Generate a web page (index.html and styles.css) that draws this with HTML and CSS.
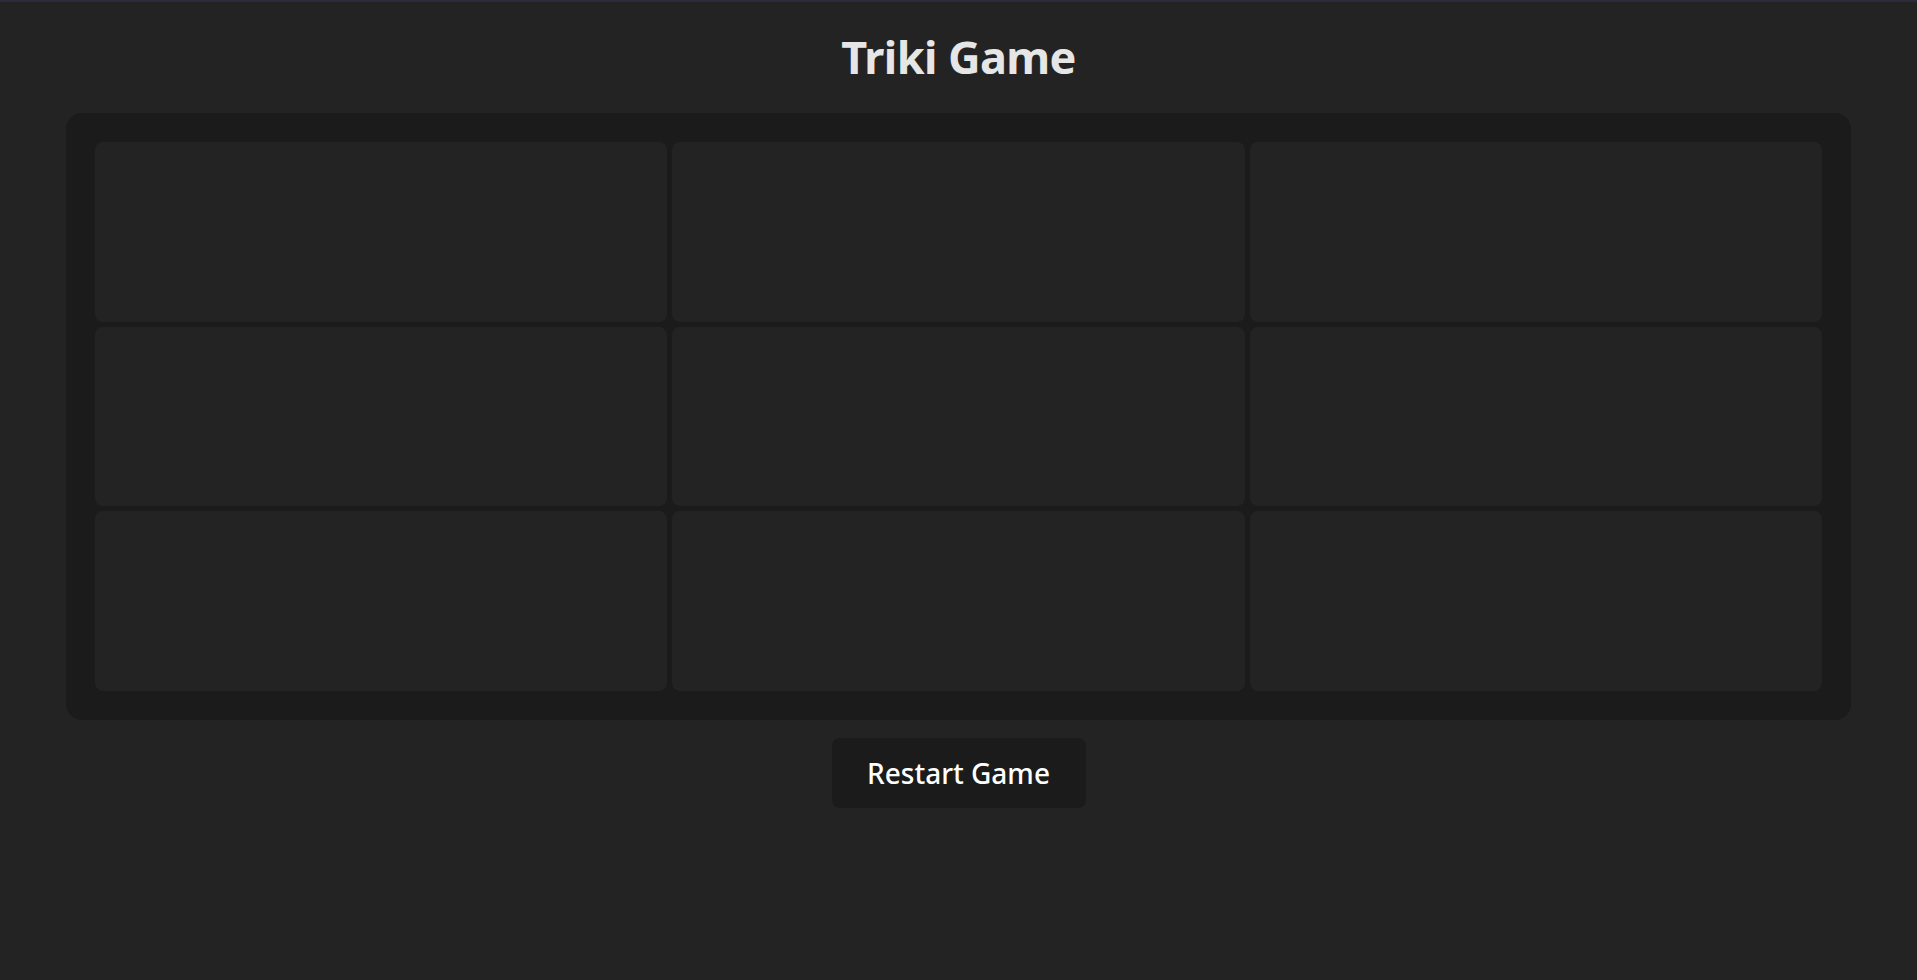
FILE: index.html
```html
<!DOCTYPE html>
<html lang="en">
<head>
<meta charset="utf-8">
<title>Triki Game</title>
<link rel="stylesheet" href="styles.css">
</head>
<body>
<main class="app">
  <h1 class="title">Triki Game</h1>
  <div class="board">
    <div class="cell"></div>
    <div class="cell"></div>
    <div class="cell"></div>
    <div class="cell"></div>
    <div class="cell"></div>
    <div class="cell"></div>
    <div class="cell"></div>
    <div class="cell"></div>
    <div class="cell"></div>
  </div>
  <button class="restart">Restart Game</button>
</main>
</body>
</html>
```
FILE: styles.css
```css
html, body {
  margin: 0;
  padding: 0;
}
body {
  background: #232323;
  border-top: 2px solid #2b2b3c;
  min-height: 978px;
  font-family: "Noto Sans", "Open Sans", sans-serif;
}
.app {
  display: flex;
  flex-direction: column;
  align-items: center;
  padding: 0 66px;
}
.title {
  margin: 28px 0 0;
  height: 83px;
  font-size: 45px;
  line-height: 54px;
  font-weight: 700;
  color: #e6e6e6;
  letter-spacing: -0.6px;
}
.board {
  align-self: stretch;
  box-sizing: border-box;
  height: 607px;
  display: grid;
  grid-template-columns: repeat(3, 1fr);
  grid-template-rows: repeat(3, 1fr);
  gap: 5px;
  padding: 29px;
  background: #1b1b1b;
  border-radius: 16px;
}
.cell {
  background: #232323;
  border-radius: 8px;
}
.restart {
  margin-top: 18px;
  width: 254px;
  height: 70px;
  border: none;
  border-radius: 8px;
  background: #1b1b1b;
  color: #ffffff;
  font-family: "Noto Sans", "Open Sans", sans-serif;
  font-size: 28px;
  font-weight: 500;
  cursor: pointer;
}
```
